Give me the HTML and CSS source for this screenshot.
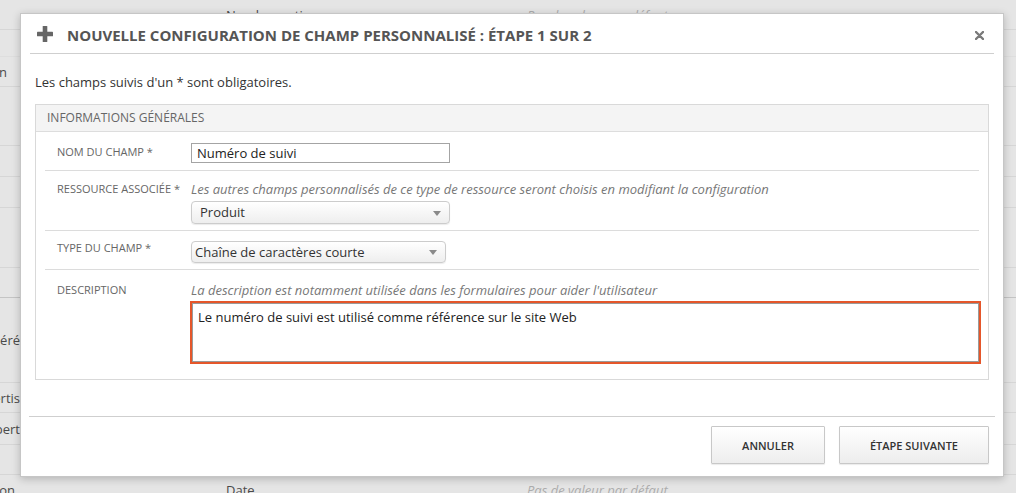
FILE: index.html
```html
<!DOCTYPE html>
<html lang="fr">
<head>
<meta charset="utf-8">
<title>Nouvelle configuration de champ personnalisé</title>
<link rel="stylesheet" href="styles.css">
</head>
<body>
<div class="bg">
  <div class="bg-row h30"><div class="c1"></div><div class="c2">Nombre entier</div><div class="c3">Pas de valeur par défaut</div><div class="c4"></div></div>
  <div class="bg-row h27 faint"><div class="c1"></div><div class="c2"></div><div class="c3"></div><div class="c4"></div></div>
  <div class="bg-row h30"><div class="c1 end7">Désignation</div><div class="c2"></div><div class="c3"></div><div class="c4"></div></div>
  <div class="bg-row h59"><div class="c1"></div><div class="c2"></div><div class="c3"></div><div class="c4"></div></div>
  <div class="bg-row h31"><div class="c1"></div><div class="c2"></div><div class="c3"></div><div class="c4"></div></div>
  <div class="bg-row h31"><div class="c1"></div><div class="c2"></div><div class="c3"></div><div class="c4"></div></div>
  <div class="bg-row h60"><div class="c1"></div><div class="c2"></div><div class="c3"></div><div class="c4"></div></div>
  <div class="bg-row h30 strong"><div class="c1"></div><div class="c2"></div><div class="c3"></div><div class="c4"></div></div>
  <div class="bg-row h85"><div class="c1">Libellé généré</div><div class="c2"></div><div class="c3"></div><div class="c4"></div></div>
  <div class="bg-row h30"><div class="c1">Alertis</div><div class="c2"></div><div class="c3"></div><div class="c4"></div></div>
  <div class="bg-row h32"><div class="c1">Propert</div><div class="c2"></div><div class="c3"></div><div class="c4"></div></div>
  <div class="bg-row h30"><div class="c1"></div><div class="c2"></div><div class="c3"></div><div class="c4"></div></div>
  <div class="bg-row h30"><div class="c1 end15">Création</div><div class="c2">Date</div><div class="c3">Pas de valeur par défaut</div><div class="c4"><span class="bar"></span></div></div>
</div>

<div class="modal">
  <div class="modal-head">
    <svg class="plus" width="16" height="16" viewBox="0 0 16 16"><rect x="5.7" y="0" width="4.6" height="16" rx="0.6" fill="#666"/><rect x="0" y="5.7" width="16" height="4.6" rx="0.6" fill="#666"/></svg>
    <h1 class="title">Nouvelle configuration de champ personnalisé : étape 1 sur 2</h1>
    <span class="close"><svg width="9" height="9" viewBox="0 0 9 9"><path d="M1 1 L8 8 M8 1 L1 8" stroke="#7a7a7a" stroke-width="2.4" stroke-linecap="round"/></svg></span>
  </div>
  <div class="modal-body">
    <p class="req">Les champs suivis d'un * sont obligatoires.</p>
    <section class="panel">
      <div class="panel-head">Informations générales</div>
      <div class="panel-body">
        <div class="row r1">
          <div class="lbl">Nom du champ *</div>
          <div class="ctl"><div class="input">Numéro de suivi</div></div>
        </div>
        <div class="row r2">
          <div class="lbl">Ressource associée *</div>
          <div class="ctl">
            <div class="hint">Les autres champs personnalisés de ce type de ressource seront choisis en modifiant la configuration</div>
            <div class="select sel-a">Produit<span class="arrow"></span></div>
          </div>
        </div>
        <div class="row r3">
          <div class="lbl">Type du champ *</div>
          <div class="ctl"><div class="select sel-b">Chaîne de caractères courte<span class="arrow"></span></div></div>
        </div>
        <div class="row r4">
          <div class="lbl">Description</div>
          <div class="ctl">
            <div class="hint">La description est notamment utilisée dans les formulaires pour aider l'utilisateur</div>
            <div class="textarea">Le numéro de suivi est utilisé comme référence sur le site Web</div>
          </div>
        </div>
      </div>
    </section>
  </div>
  <div class="modal-foot">
    <button class="btn">Annuler</button>
    <button class="btn">Étape suivante</button>
  </div>
</div>
</body>
</html>
```

FILE: styles.css
```css
* { box-sizing: border-box; }
html, body { margin: 0; padding: 0; }
body {
  width: 1016px;
  height: 493px;
  overflow: hidden;
  position: relative;
  font-family: "Open Sans", "Noto Sans", sans-serif;
  font-size: 13px;
  color: #333;
  background: #e5e5e5;
}

/* background table (under overlay) */
.bg { width: 1016px; }
.bg-row {
  display: grid;
  grid-template-columns: 226px 301px 450px 1fr;
  align-items: center;
  border-bottom: 1px solid #d6d6d6;
  color: #4a4a4a;
  white-space: nowrap;
}
.bg-row.faint { border-bottom-color: #dedede; }
.bg-row.strong { border-bottom-color: #c4c4c4; }
.h27 { height: 27px; }
.h30 { height: 30px; }
.h31 { height: 31px; }
.h32 { height: 32px; }
.h59 { height: 59px; }
.h60 { height: 60px; }
.h85 { height: 85px; }
.c1 { display: flex; justify-content: flex-end; padding-right: 206px; }
.c1.end7 { padding-right: 219px; }
.c1.end15 { padding-right: 211px; }
.c2 { padding-top: 1px; }
.c3 { color: #acacac; font-style: italic; }
.bar { display: block; width: 12px; height: 3px; background: #444; margin-top: 10px; }

/* modal */
.modal {
  position: absolute;
  left: 20px;
  top: 13px;
  width: 984px;
  height: 464px;
  background: #fff;
  border: 1px solid #c6c6c6;
  box-shadow: 0 2px 8px rgba(0, 0, 0, 0.22);
  display: flex;
  flex-direction: column;
}
.modal-head {
  margin: 0 9px;
  height: 40px;
  border-bottom: 1px solid #cfcfcf;
  display: flex;
  align-items: center;
  padding: 0 10px 0 7px;
}
.plus { flex: none; margin-top: 1px; }
.title {
  flex: 1;
  margin: 0 0 0 14px;
  font-size: 15px;
  font-weight: 700;
  color: #555;
  text-transform: uppercase;
  line-height: 20px;
  padding-top: 2px;
}
.close { display: flex; margin-top: 3px; }

.modal-body { padding: 0 14px; }
.req { margin: 19px 0 13px; line-height: 18px; color: #333; }

.panel { border: 1px solid #d9d9d9; }
.panel-head {
  height: 27px;
  background: #f4f4f4;
  border-bottom: 1px solid #dddddd;
  padding-left: 11px;
  font-size: 12px;
  line-height: 26px;
  color: #666;
  text-transform: uppercase;
}
.panel-body { padding: 0 9px 0; }

.row {
  display: grid;
  grid-template-columns: 146px 1fr;
  align-items: start;
  border-bottom: 1px solid #dcdcdc;
}
.row.r4 { border-bottom: none; }
.r1 { padding: 11px 0 7px; }
.r2 { padding: 9px 0 6px; }
.r3 { padding: 8px 0 6px; }
.r4 { padding: 11px 0 17px; }

.lbl {
  padding-left: 12px;
  font-size: 11px;
  line-height: 18px;
  color: #666;
  text-transform: uppercase;
}
.ctl { display: flex; flex-direction: column; align-items: flex-start; }
.hint { font-style: italic; color: #777; line-height: 18px; white-space: nowrap; }

.input {
  width: 259px;
  height: 20px;
  border: 1px solid #a4a4a4;
  padding-left: 5px;
  line-height: 18px;
  color: #222;
}

.select {
  position: relative;
  height: 23px;
  border: 1px solid #cccccc;
  border-radius: 4px;
  background: linear-gradient(#ffffff, #eeeeee);
  box-shadow: 0 1px 1px rgba(0, 0, 0, 0.08);
  line-height: 21px;
  color: #333;
}
.sel-a { width: 259px; margin-top: 3px; padding-left: 8px; }
.sel-b { width: 255px; height: 22px; line-height: 20px; margin-top: 2px; padding-left: 3px; }
.arrow {
  position: absolute;
  right: 8px;
  top: 50%;
  margin-top: -2px;
  width: 0;
  height: 0;
  border-left: 4px solid transparent;
  border-right: 4px solid transparent;
  border-top: 5px solid #8a8a8a;
}

.textarea {
  width: calc(100% - 1px);
  margin: 4px 0 0 1px;
  height: 59px;
  border: 1px solid #9a9a9a;
  box-shadow: 0 0 0 2px #e5562a;
  padding: 4px 5px;
  line-height: 18px;
  color: #222;
}

.modal-foot {
  margin: auto 8px 0;
  border-top: 1px solid #cfcfcf;
  display: flex;
  justify-content: flex-end;
  gap: 14px;
  padding: 9px 6px 12px;
}
.btn {
  height: 38px;
  padding: 0 30px;
  border: 1px solid #c8c8c8;
  border-radius: 1px;
  background: linear-gradient(#ffffff, #ededed);
  box-shadow: 0 1px 1px rgba(0, 0, 0, 0.08);
  font-family: "Open Sans", "Noto Sans", sans-serif;
  font-size: 11px;
  font-weight: 600;
  color: #333;
  text-transform: uppercase;
}
```
